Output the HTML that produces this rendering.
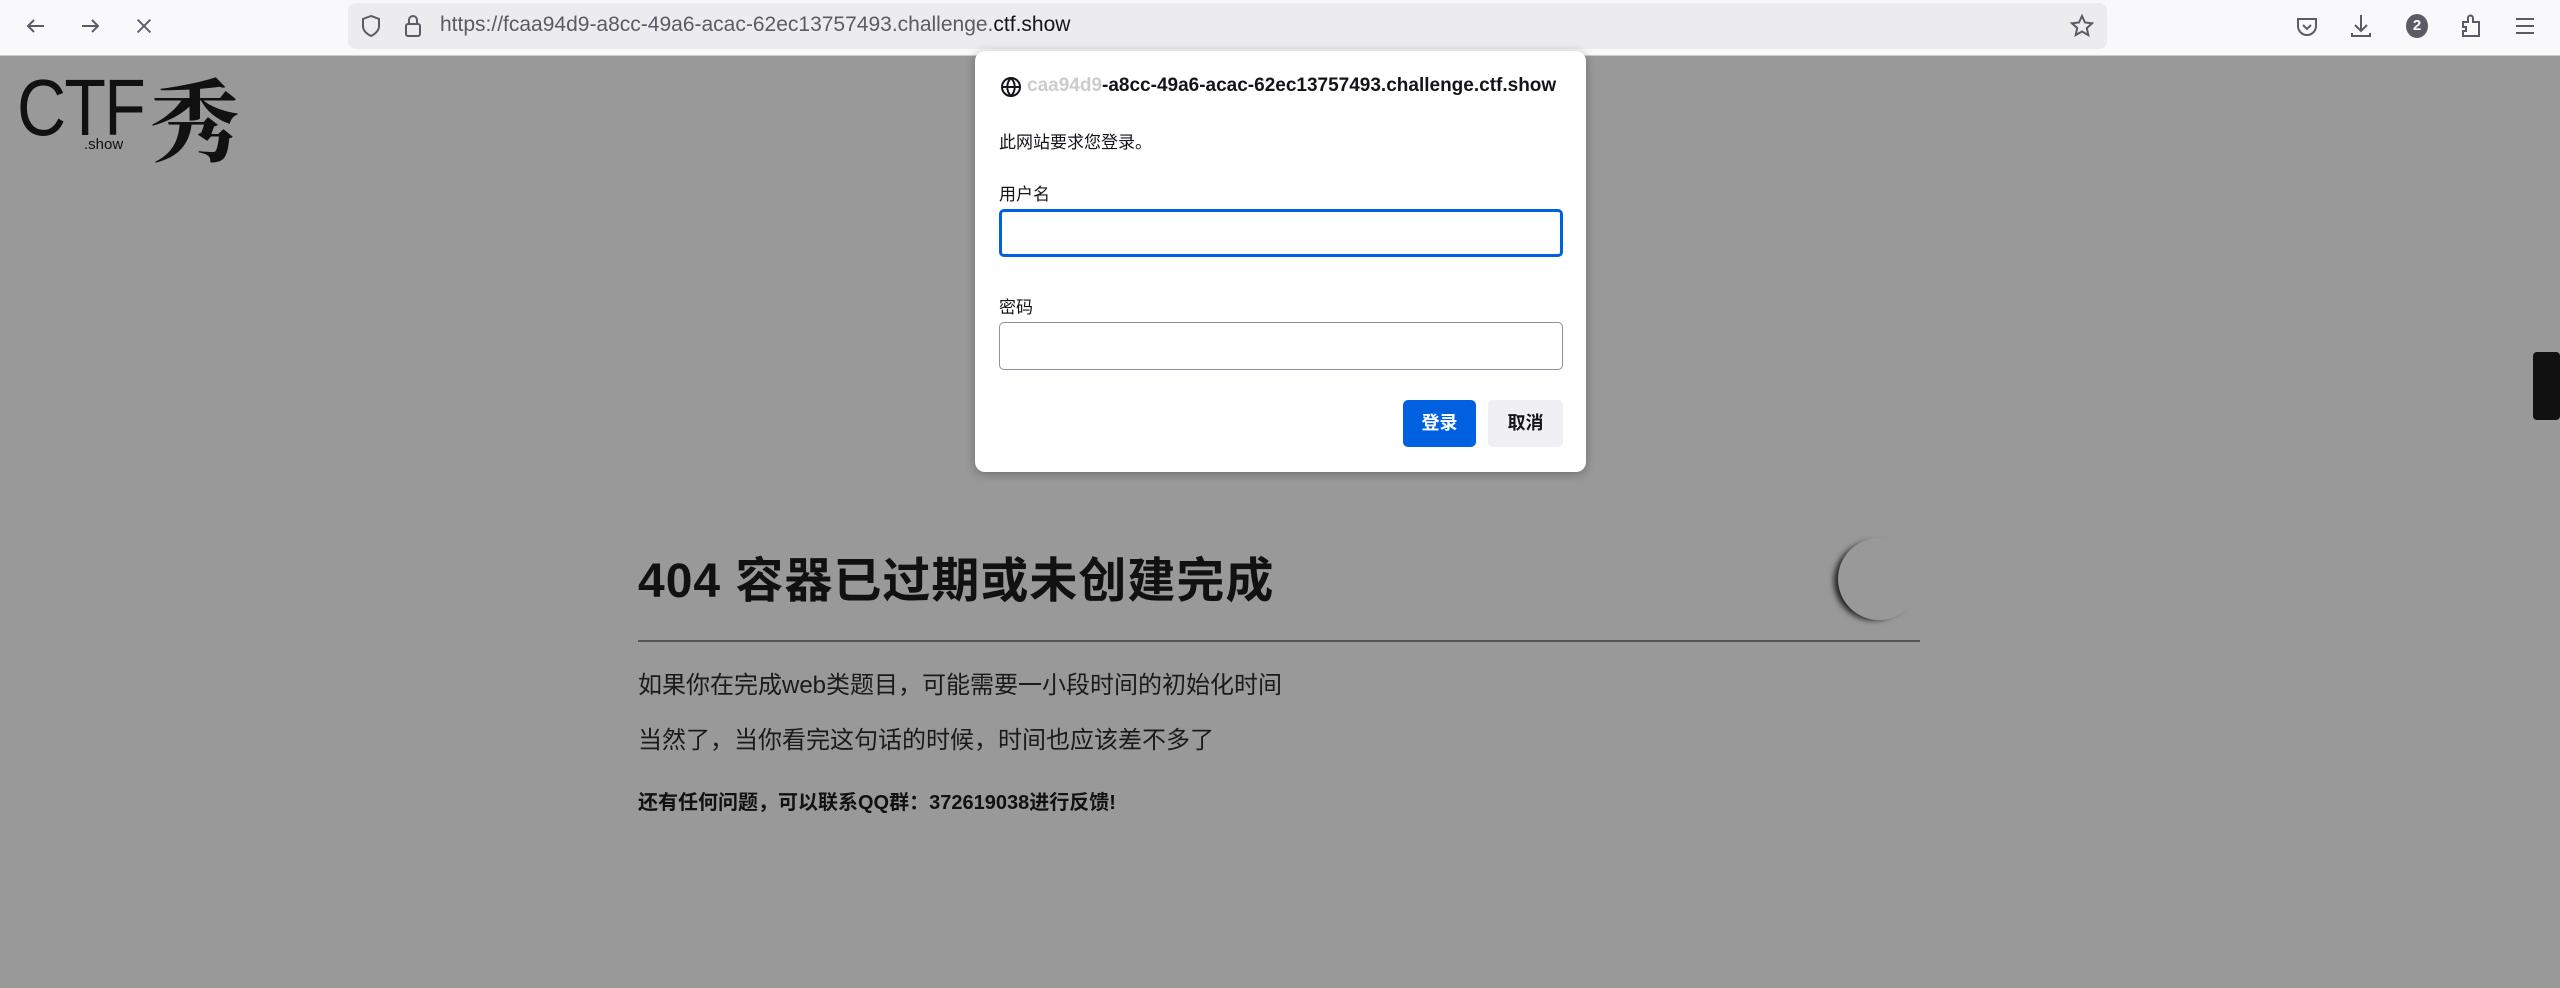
<!DOCTYPE html>
<html><head><meta charset="utf-8"><style>
*{margin:0;padding:0;box-sizing:border-box}
body{width:2560px;height:988px;overflow:hidden;background:#99999a;font-family:"Liberation Sans","Noto Sans CJK SC",sans-serif;position:relative}
.tb{position:absolute;left:0;top:0;width:2560px;height:56px;background:#f9f9fb;border-bottom:1px solid #ccc}
.url{position:absolute;left:348px;top:3px;width:1759px;height:46px;background:#ececef;border-radius:8px}
.abs{position:absolute}
.ic{position:absolute;stroke:#5b5b66;fill:none;stroke-width:2}
.dlg{position:absolute;left:975px;top:51px;width:611px;height:421px;background:#fff;border-radius:10px;box-shadow:0 2px 10px rgba(0,0,0,.3)}
.lbl{position:absolute;left:24px;font-size:17px;color:#15141a}
.inp{position:absolute;left:24px;width:564px;border-radius:5px}
.h1{position:absolute;left:638px;top:541px;font-size:48px;font-weight:bold;color:#111;letter-spacing:1px}
.p{position:absolute;left:638px;font-size:24px;color:#1a1a1a}
</style></head><body>
<div class="tb">
<svg class="ic" style="left:24px;top:14px" width="24" height="24" viewBox="0 0 24 24" stroke="#aaa"><path d="M20 12H4M10 6l-6 6 6 6"/></svg>
<svg class="ic" style="left:78px;top:14px" width="24" height="24" viewBox="0 0 24 24" stroke="#aaa"><path d="M4 12h16M14 6l6 6-6 6"/></svg>
<svg class="ic" style="left:133px;top:15px" width="22" height="22" viewBox="0 0 24 24"><path d="M5 5l14 14M19 5L5 19"/></svg>
<div class="url"></div>
<svg class="ic" style="left:360px;top:14px" width="22" height="24" viewBox="0 0 22 24"><path d="M11 2L3 5v7c0 5 4 8 8 10 4-2 8-5 8-10V5z"/></svg>
<svg class="ic" style="left:403px;top:13px" width="20" height="26" viewBox="0 0 20 26"><rect x="3" y="11" width="14" height="12" rx="2"/><path d="M6 11V7a4 4 0 018 0v4"/></svg>
<div class="abs" style="left:440px;top:13px;font-size:21px;color:#5b5b66">https://fcaa94d9-a8cc-49a6-acac-62ec13757493.challenge.<span style="color:#15141a">ctf.show</span></div>
<svg class="ic" style="left:2070px;top:14px" width="24" height="24" viewBox="0 0 24 24"><path d="M12 2l3 6.5 7 .8-5.2 4.8 1.5 7L12 17.5 5.7 21l1.5-7L2 9.3l7-.8z"/></svg>
<svg class="ic" style="left:2296px;top:16px" width="22" height="22" viewBox="0 0 22 22"><path d="M2 3h18v7a9 9 0 01-18 0z"/><path d="M7 9l4 4 4-4"/></svg>
<svg class="ic" style="left:2350px;top:13px" width="22" height="26" viewBox="0 0 22 26"><path d="M11 2v16M5 12l6 6 6-6M2 20v3h18v-3"/></svg>
<div class="abs" style="left:2406px;top:14px;width:22px;height:24px;border-radius:50%;background:#5b5b66;color:#fff;font-size:15px;font-weight:bold;text-align:center;line-height:24px">2</div>
<svg class="ic" style="left:2460px;top:13px" width="22" height="26" viewBox="0 0 22 26"><path d="M3 23h16V9h-6V5a2.5 2.5 0 00-5 0v4H3v5h3v4H3z"/></svg>
<svg class="ic" style="left:2515px;top:17px" width="20" height="18" viewBox="0 0 20 18"><path d="M1 2h18M1 9h18M1 16h18"/></svg>
</div>
<div class="abs" style="left:17px;top:62px;font-size:80px;color:#111;font-weight:300;letter-spacing:-2px;transform:scaleX(.85);transform-origin:left">CTF</div>
<div class="abs" style="left:150px;top:50px;font-size:90px;color:#111;font-family:'Noto Serif CJK SC',serif;font-weight:bold">秀</div>
<div class="abs" style="left:84px;top:136px;font-size:15px;color:#111">.show</div>
<div class="h1">404 容器已过期或未创建完成</div>
<div class="abs" style="left:1838px;top:538px;width:82px;height:82px;border-radius:50%;box-shadow:-6px 2px 6px -2px #222"></div>
<div class="abs" style="left:638px;top:640px;width:1282px;height:2px;background:#555"></div>
<div class="p" style="top:665px">如果你在完成web类题目，可能需要一小段时间的初始化时间</div>
<div class="p" style="top:720px">当然了，当你看完这句话的时候，时间也应该差不多了</div>
<div class="p" style="top:786px;font-size:20px;font-weight:bold;color:#111">还有任何问题，可以联系QQ群：372619038进行反馈!</div>
<div class="abs" style="left:2533px;top:352px;width:27px;height:68px;background:#111;border-radius:4px"></div>
<div class="dlg">
<svg class="abs" style="left:25px;top:25px" width="22" height="22" viewBox="0 0 22 22" fill="none" stroke="#15141a" stroke-width="2"><circle cx="11" cy="11" r="9"/><path d="M2 11h18M11 2c-5 5-5 13 0 18M11 2c5 5 5 13 0 18"/></svg>
<div class="abs" style="left:52px;top:24px;font-size:19px;font-weight:bold;color:#15141a;white-space:nowrap"><span style="color:#ccc">caa94d9</span>-a8cc-49a6-acac-62ec13757493.challenge.ctf.show</div>
<div class="lbl" style="top:77px">此网站要求您登录。</div>
<div class="lbl" style="top:129px">用户名</div>
<div class="inp" style="top:158px;height:48px;border:3px solid #0061e0"></div>
<div class="lbl" style="top:242px">密码</div>
<div class="inp" style="top:271px;height:48px;border:1px solid #8f8f9d"></div>
<div class="abs" style="left:428px;top:349px;width:73px;height:47px;background:#0061e0;border-radius:5px;color:#fff;font-weight:bold;font-size:18px;text-align:center;line-height:47px">登录</div>
<div class="abs" style="left:513px;top:349px;width:75px;height:47px;background:#f0f0f4;border-radius:5px;color:#15141a;font-weight:bold;font-size:18px;text-align:center;line-height:47px">取消</div>
</div>
</body></html>
